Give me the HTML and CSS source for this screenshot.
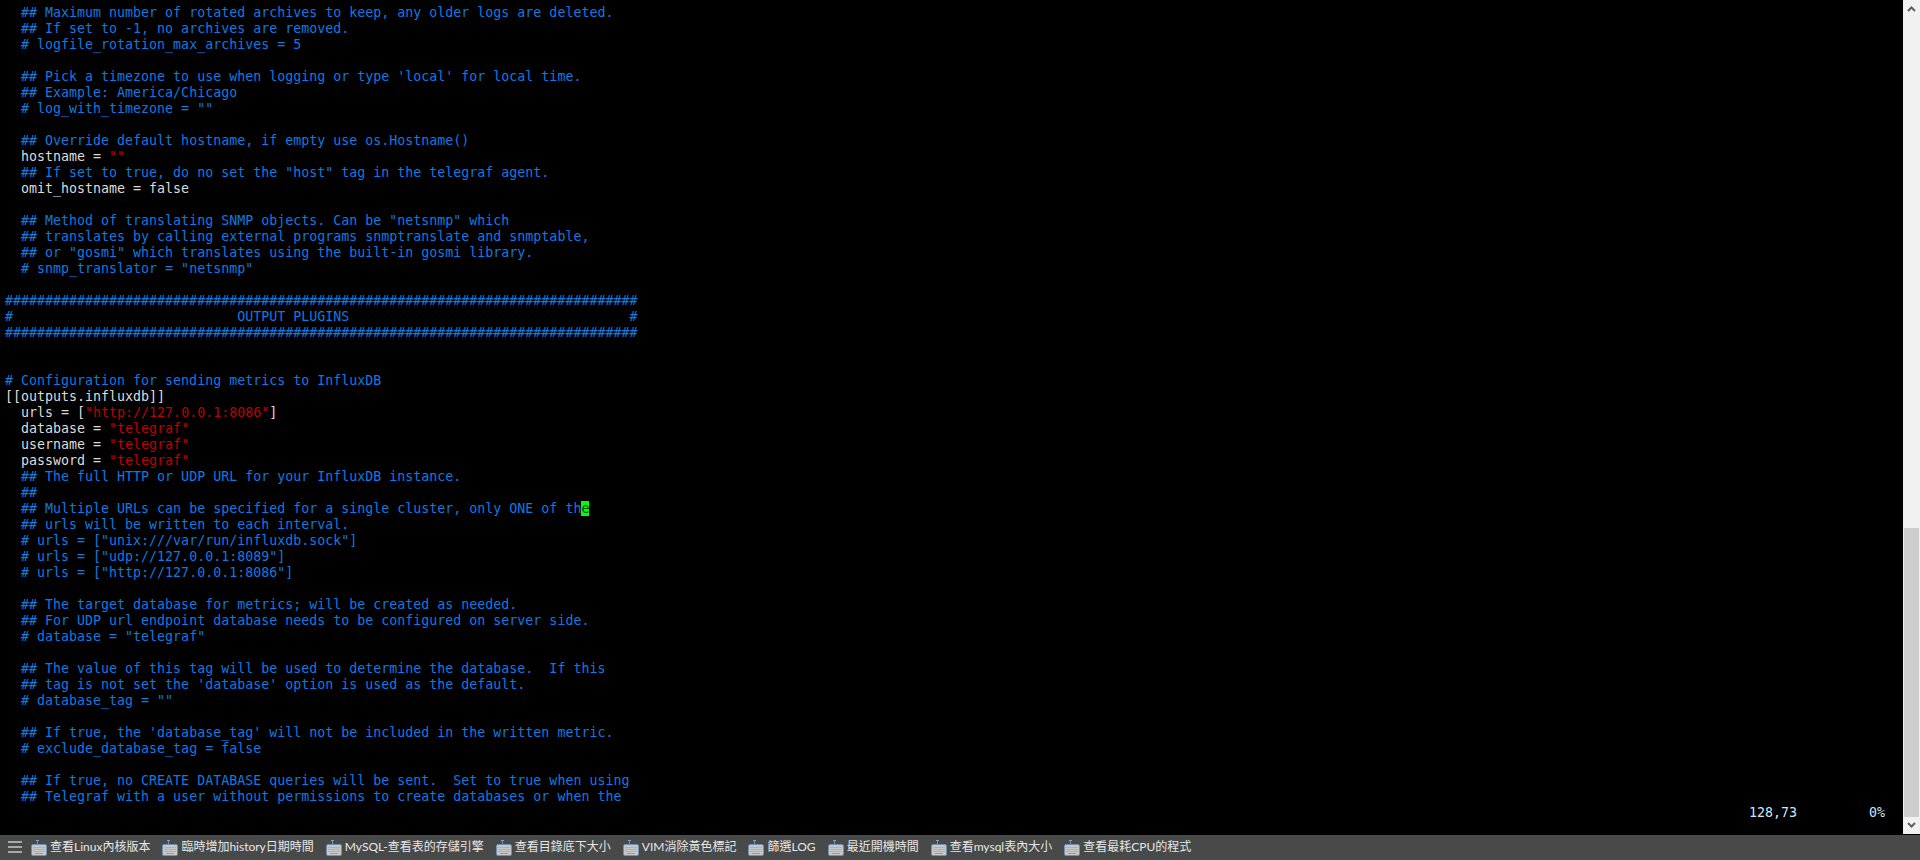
FILE: index.html
```html
<!DOCTYPE html>
<html lang="zh-Hant">
<head>
<meta charset="utf-8">
<title>Terminal</title>
<link rel="stylesheet" href="styles.css">
</head>
<body>
<svg class="defs" width="0" height="0" aria-hidden="true">
<symbol id="kbd" viewBox="0 0 16 16">
<path d="M6.5 0V4" stroke="#6f93b5" stroke-width="1" fill="none"/>
<rect x="5" y="0" width="3" height="1" fill="#7fa2c2"/>
<rect x="0.5" y="4.5" width="15" height="11" rx="1.5" fill="#c6c8ca" stroke="#6d8fb0"/>
<path d="M2.5 7.5h11M2.5 9.5h11M2.5 11.5h11" stroke="#9a9a9a" stroke-width="1" stroke-dasharray="1 1" fill="none"/>
<path d="M4 13.5h8" stroke="#9a9a9a" stroke-width="1" fill="none"/>
</symbol>
</svg>
<main class="window">
<pre class="term"><code>  <i>## Maximum number of rotated archives to keep, any older logs are deleted.</i>
  <i>## If set to -1, no archives are removed.</i>
  <i># logfile_rotation_max_archives = 5</i>

  <i>## Pick a timezone to use when logging or type 'local' for local time.</i>
  <i>## Example: America/Chicago</i>
  <i># log_with_timezone = ""</i>

  <i>## Override default hostname, if empty use os.Hostname()</i>
<span>  hostname = </span><b>""</b>
  <i>## If set to true, do no set the "host" tag in the telegraf agent.</i>
<span>  omit_hostname = false</span>

  <i>## Method of translating SNMP objects. Can be "netsnmp" which</i>
  <i>## translates by calling external programs snmptranslate and snmptable,</i>
  <i>## or "gosmi" which translates using the built-in gosmi library.</i>
  <i># snmp_translator = "netsnmp"</i>

<i>###############################################################################</i>
<i>#                            OUTPUT PLUGINS                                   #</i>
<i>###############################################################################</i>


<i># Configuration for sending metrics to InfluxDB</i>
<span>[[outputs.influxdb]]</span>
<span>  urls = [</span><b>"http://127.0.0.1:8086"</b><span>]</span>
<span>  database = </span><b>"telegraf"</b>
<span>  username = </span><b>"telegraf"</b>
<span>  password = </span><b>"telegraf"</b>
  <i>## The full HTTP or UDP URL for your InfluxDB instance.</i>
  <i>##</i>
  <i>## Multiple URLs can be specified for a single cluster, only ONE of th</i><u>e</u>
  <i>## urls will be written to each interval.</i>
  <i># urls = ["unix:///var/run/influxdb.sock"]</i>
  <i># urls = ["udp://127.0.0.1:8089"]</i>
  <i># urls = ["http://127.0.0.1:8086"]</i>

  <i>## The target database for metrics; will be created as needed.</i>
  <i>## For UDP url endpoint database needs to be configured on server side.</i>
  <i># database = "telegraf"</i>

  <i>## The value of this tag will be used to determine the database.  If this</i>
  <i>## tag is not set the 'database' option is used as the default.</i>
  <i># database_tag = ""</i>

  <i>## If true, the 'database_tag' will not be included in the written metric.</i>
  <i># exclude_database_tag = false</i>

  <i>## If true, no CREATE DATABASE queries will be sent.  Set to true when using</i>
  <i>## Telegraf with a user without permissions to create databases or when the</i>
<span class="ruler">128,73         0%</span></code></pre>
<aside class="scrollbar">
<div class="arrow"><svg width="9" height="7" viewBox="0 0 9 7"><path d="M1 6 4.5 2.5 8 6" stroke="#606060" stroke-width="2" fill="none"/></svg></div>
<div class="spacer"></div>
<div class="thumb"></div>
<div class="arrow"><svg width="9" height="7" viewBox="0 0 9 7"><path d="M1 1 4.5 4.5 8 1" stroke="#606060" stroke-width="2" fill="none"/></svg></div>
</aside>
</main>
<footer class="bar">
<button class="menu" aria-label="menu"><span></span><span></span><span></span></button>
<nav class="cmds">
<a class="cmd"><svg class="kbd"><use href="#kbd"/></svg>查看Linux內核版本</a>
<a class="cmd"><svg class="kbd"><use href="#kbd"/></svg>臨時增加history日期時間</a>
<a class="cmd"><svg class="kbd"><use href="#kbd"/></svg>MySQL-查看表的存儲引擎</a>
<a class="cmd"><svg class="kbd"><use href="#kbd"/></svg>查看目錄底下大小</a>
<a class="cmd"><svg class="kbd"><use href="#kbd"/></svg>VIM消除黃色標記</a>
<a class="cmd"><svg class="kbd"><use href="#kbd"/></svg>篩選LOG</a>
<a class="cmd"><svg class="kbd"><use href="#kbd"/></svg>最近開機時間</a>
<a class="cmd"><svg class="kbd"><use href="#kbd"/></svg>查看mysql表內大小</a>
<a class="cmd"><svg class="kbd"><use href="#kbd"/></svg>查看最耗CPU的程式</a>
</nav>
</footer>
</body>
</html>
```
FILE: styles.css
```css
* { box-sizing: border-box; }
html, body { margin: 0; height: 100%; overflow: hidden; background: #000; }
body { display: flex; flex-direction: column; height: 860px; }
.defs { position: absolute; }
.window { display: flex; height: 834px; }
.term {
  flex: 1;
  margin: 0;
  padding: 5px 0 0 5px;
  background: #000;
  color: #dcdcdc;
  font: 13.3px/16px "DejaVu Sans Mono", monospace;
  overflow: hidden;
}
.term code { font: inherit; }
.term i { font-style: normal; color: #1179e0; }
.term b { font-weight: normal; color: #bf0000; }
.term u { text-decoration: none; background: #00ff00; color: #064a06; }
.ruler { display: block; margin-left: 1744px; color: #cfe4f7; }
.scrollbar { width: 17px; background: #f1f1f1; display: flex; flex-direction: column; align-items: stretch; }
.arrow { height: 17px; display: flex; align-items: center; justify-content: center; }
.spacer { flex: 1; }
.thumb { height: 289px; margin: 0 1px; background: #cdcdcd; }
.bar {
  margin-top: 1px;
  height: 25px;
  padding-bottom: 2px;
  background: #484a4a;
  display: flex;
  align-items: center;
  color: #e6e6e6;
  font: 12px/16px Lato, "Noto Sans CJK TC", sans-serif;
}
.menu { width: 31px; height: 23px; padding: 0 0 0 8px; margin: 0; border: 0; background: none; display: flex; flex-direction: column; justify-content: center; gap: 3px; }
.menu span { display: block; width: 14px; height: 2px; background: #a8a8a8; }
.cmds { display: flex; gap: 12px; align-items: center; }
.cmd { display: flex; align-items: center; gap: 3px; white-space: nowrap; }
.kbd { width: 16px; height: 16px; position: relative; top: 1px; }
```
